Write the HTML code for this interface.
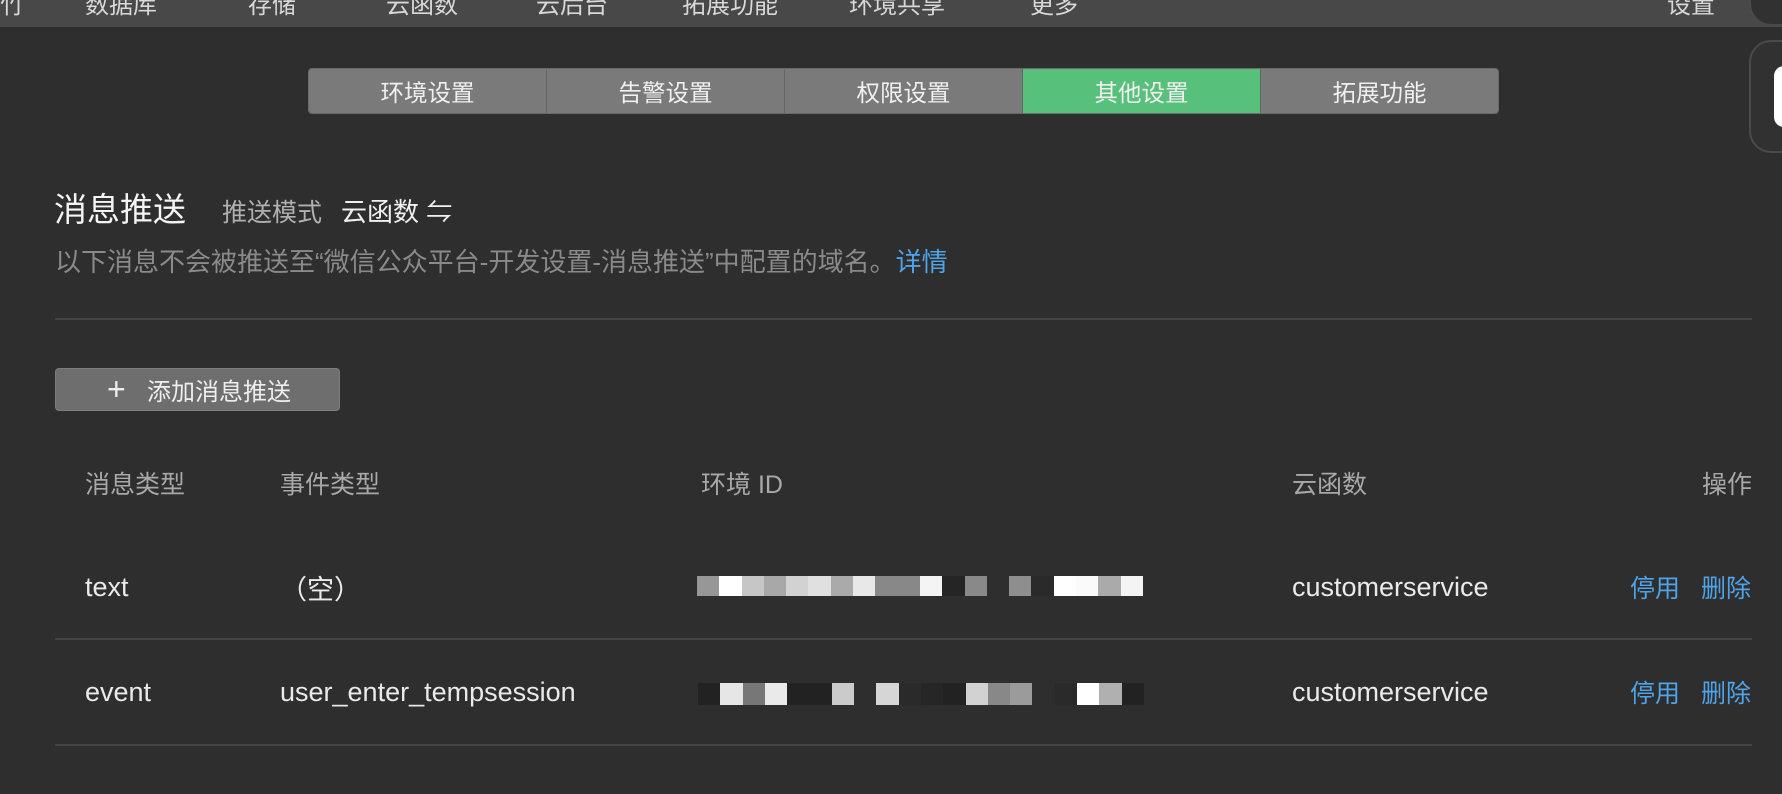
<!DOCTYPE html>
<html><head><meta charset="utf-8"><style>
*{margin:0;padding:0;box-sizing:border-box}
body{width:1782px;height:794px;overflow:hidden;background:#2e2e2e;font-family:"Liberation Sans","Noto Sans CJK SC",sans-serif;color:#e8e8e8;position:relative}
.a{position:absolute;white-space:nowrap}
.top{position:absolute;left:0;top:0;width:1782px;height:27px;background:#484848}
.top span{position:absolute;top:-15px;font-size:24px;color:#d8d8d8}
.tabs{position:absolute;left:308px;top:68px;width:1191px;height:46px;display:flex;border-radius:4px;overflow:hidden;border:1px solid #6a6a6a}
.tabs div{flex:1;background:#7a7a7a;color:#f0f0f0;font-size:23.5px;display:flex;align-items:center;justify-content:center;border-right:1px solid #666}
.tabs div.on{background:#57c07a}
.tabs div:last-child{border-right:none}
.hr{position:absolute;left:55px;width:1697px;height:2px;background:#444}
.btn{position:absolute;left:55px;top:368px;width:285px;height:43px;background:#6e6e6e;border:1px solid #7c7c7c;border-radius:4px;font-size:24px;color:#eee;display:flex;align-items:center}
.btn b{position:absolute;left:51px;top:8px;font-weight:normal;font-size:32px;line-height:24px}
.h{font-size:25px;color:#a8a8a8;top:465px}
.c{font-size:27px;color:#eaeaea}
.l{font-size:25px;color:#4fa3e6}
.px{position:absolute;display:flex;height:20px}
.px i{display:block;width:22.3px;height:100%}
.side{position:absolute;left:1749px;border:2px solid #4a4a4a;border-radius:22px;background:#313131;width:60px}
</style></head><body>
<div class="top">
<span style="left:0">竹</span>
<span style="left:85px">数据库</span><span style="left:248px">存储</span><span style="left:386px">云函数</span><span style="left:536px">云后台</span><span style="left:682px">拓展功能</span><span style="left:849px">环境共享</span><span style="left:1030px">更多</span><span style="left:1667px">设置</span>
</div>
<div class="side" style="top:-40px;height:66px"></div>
<div class="side" style="top:40px;height:113px"><div style="position:absolute;left:23px;top:24px;width:20px;height:61px;background:#fff;border-radius:10px 0 0 10px"></div></div>
<div class="tabs"><div>环境设置</div><div>告警设置</div><div>权限设置</div><div class="on">其他设置</div><div>拓展功能</div></div>
<div class="a" style="left:54px;top:183px;font-size:33px;color:#f4f4f4">消息推送</div>
<div class="a" style="left:222px;top:193px;font-size:25px;color:#b0b0b0">推送模式</div>
<div class="a" style="left:341px;top:192px;font-size:26px;color:#f0f0f0">云函数 ⇋</div>
<div class="a" style="left:55px;top:242px;font-size:26px;color:#8a8a8a">以下消息不会被推送至“微信公众平台-开发设置-消息推送”中配置的域名。<span style="color:#4fa3e6">详情</span></div>
<div class="hr" style="top:318px"></div>
<div class="btn"><b>+</b><span style="margin-left:91px">添加消息推送</span></div>
<div class="a h" style="left:85px">消息类型</div>
<div class="a h" style="left:280px">事件类型</div>
<div class="a h" style="left:701px">环境 ID</div>
<div class="a h" style="left:1292px">云函数</div>
<div class="a h" style="left:1702px">操作</div>
<div class="a c" style="left:85px;top:572px">text</div>
<div class="a c" style="left:280px;top:568px">（空）</div>
<div class="px" style="left:697px;top:576px"><i style="background:#979797"></i><i style="background:#fff"></i><i style="background:#c6c6c6"></i><i style="background:#a8a8a8"></i><i style="background:#d2d2d2"></i><i style="background:#e0e0e0"></i><i style="background:#aaa"></i><i style="background:#e8e8e8"></i><i style="background:#888"></i><i style="background:#888"></i><i style="background:#f4f4f4"></i><i style="background:#252525"></i><i style="background:#898989"></i><i style="background:#2e2e2e"></i><i style="background:#8e8e8e"></i><i style="background:#2a2a2a"></i><i style="background:#fff"></i><i style="background:#fafafa"></i><i style="background:#aaa"></i><i style="background:#f4f4f4"></i></div>
<div class="a c" style="left:1292px;top:572px">customerservice</div>
<div class="a l" style="left:1630px;top:569px">停用</div>
<div class="a l" style="left:1701px;top:569px">删除</div>
<div class="hr" style="top:638px"></div>
<div class="a c" style="left:85px;top:677px">event</div>
<div class="a c" style="left:280px;top:677px">user_enter_tempsession</div>
<div class="px" style="left:698px;top:683px;height:22px"><i style="background:#222"></i><i style="background:#e6e6e6"></i><i style="background:#777"></i><i style="background:#eaeaea"></i><i style="background:#222"></i><i style="background:#222"></i><i style="background:#cbcbcb"></i><i style="background:#2e2e2e"></i><i style="background:#d6d6d6"></i><i style="background:#2a2a2a"></i><i style="background:#262626"></i><i style="background:#222"></i><i style="background:#d2d2d2"></i><i style="background:#888"></i><i style="background:#9b9b9b"></i><i style="background:#2e2e2e"></i><i style="background:#2a2a2a"></i><i style="background:#fff"></i><i style="background:#b0b0b0"></i><i style="background:#222"></i></div>
<div class="a c" style="left:1292px;top:677px">customerservice</div>
<div class="a l" style="left:1630px;top:674px">停用</div>
<div class="a l" style="left:1701px;top:674px">删除</div>
<div class="hr" style="top:744px"></div>
</body></html>
